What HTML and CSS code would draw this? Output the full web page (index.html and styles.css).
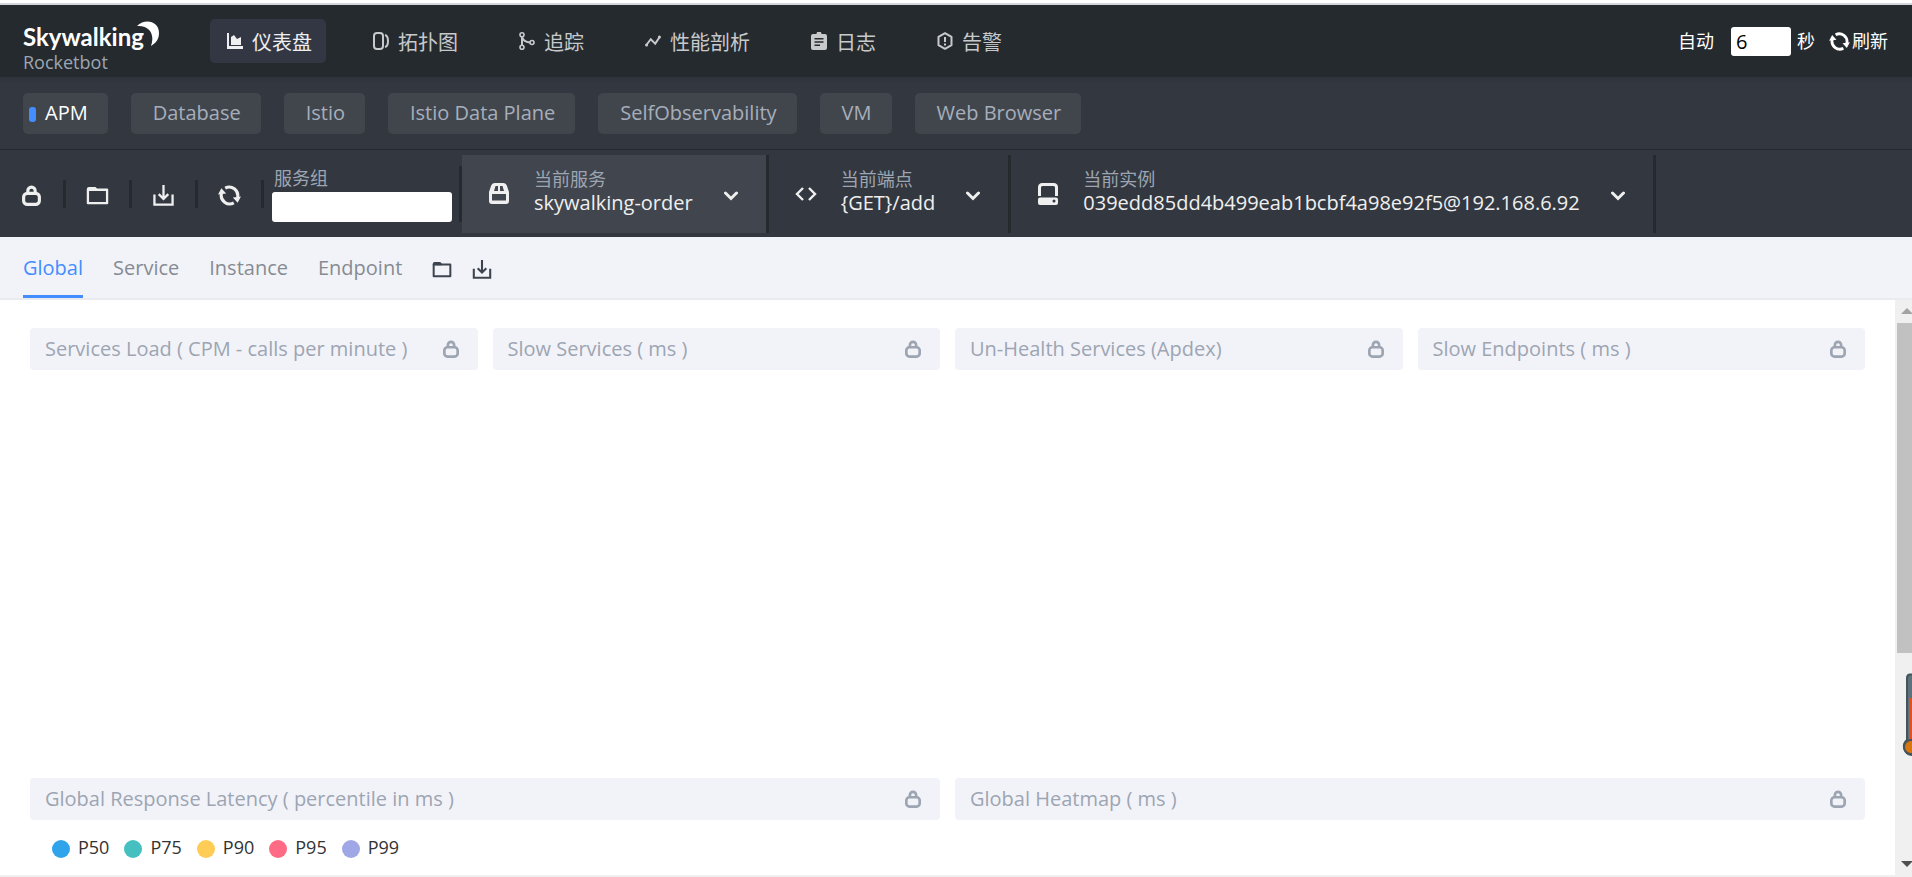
FILE: index.html
```html
<!DOCTYPE html>
<html lang="zh">
<head>
    <meta charset="UTF-8">
    <meta name="viewport" content="width=device-width, initial-scale=1.0">
    <title>SkyWalking Rocketbot</title>
    <link rel="stylesheet" href="styles.css">
</head>
<body>
    <!-- Shared icons -->
    <svg class="sprite">
        <symbol id="lock" viewBox="0 0 18 20">
            <rect x="1.5" y="8" width="15" height="10.5" rx="3.5" fill="none" stroke="currentColor" stroke-width="3"/>
            <path d="M5.5 8V5.5a3.5 3.5 0 0 1 7 0V8" fill="none" stroke="currentColor" stroke-width="3"/>
        </symbol>
        <symbol id="folder" viewBox="0 0 24 20">
            <path d="M2 18V4h20v14z" fill="none" stroke="currentColor" stroke-width="2.400" stroke-linejoin="round"/>
            <path d="M1 3q0-2 2-2h7l2 2.500V5H1z" fill="currentColor"/>
        </symbol>
        <symbol id="download" viewBox="0 0 22 22">
            <path d="M1.500 10v10.500h19V10M11 0v14M6 9.500l5 5 5-5" fill="none" stroke="currentColor" stroke-width="2.400"/>
        </symbol>
        <symbol id="reload" viewBox="0 0 24 22">
            <path d="M7.500 3.200A9 9 0 0 1 20.500 13M16.500 18.800A9 9 0 0 1 3.500 9" fill="none" stroke="currentColor" stroke-width="3.200"/>
            <path d="M15.500 13l8.500-1-3.500 6.500zM8.500 9L0 10l3.500-6.500z" fill="currentColor"/>
        </symbol>
        <symbol id="chevron" viewBox="0 0 14 10">
            <path d="M1.500 2L7 7.500 12.500 2" fill="none" stroke="currentColor" stroke-width="3" stroke-linecap="round"/>
        </symbol>
    </svg>

    <header class="header">
        <div class="logo">
            <span class="logo-name">Skywalking</span>
            <svg class="logo-moon" viewBox="0 0 22 25"><path d="M0 5C8-3 22 0 22 12c0 6-3 10-8 13C18 14 13 4 0 5z" fill="#fff"/></svg>
            <span class="logo-sub">Rocketbot</span>
        </div>
        <nav class="nav">
            <a class="nav-item active" href="#">
                <svg viewBox="0 0 16 16"><path d="M0 0h2v13h14v3H0z" fill="currentColor"/><path d="M4 12V4l3-2 3 4 4-2v8z" fill="currentColor"/></svg>仪表盘
            </a>
            <a class="nav-item" href="#">
                <svg viewBox="0 0 16 18"><rect x="1" y="1" width="9" height="16" rx="3" fill="none" stroke="currentColor" stroke-width="2"/><path d="M12 3c4 1 4 11 0 12" fill="none" stroke="currentColor" stroke-width="2"/></svg>拓扑图
            </a>
            <a class="nav-item" href="#">
                <svg viewBox="0 0 16 18"><g fill="none" stroke="currentColor" stroke-width="1.600"><circle cx="3" cy="2.800" r="2"/><circle cx="3" cy="15.200" r="2"/><circle cx="13" cy="10.500" r="2"/><path d="M3 5v8M3 5c1 4 4 5 8 5.500" stroke-width="2"/></g></svg>追踪
            </a>
            <a class="nav-item" href="#">
                <svg viewBox="0 0 18 14"><path d="M1.500 11.500L6.500 5l5 5L16.500 2.500" fill="none" stroke="currentColor" stroke-width="2.200"/><circle cx="1.800" cy="11.500" r="1.700" fill="currentColor"/><circle cx="16.200" cy="2.500" r="1.700" fill="currentColor"/></svg>性能剖析
            </a>
            <a class="nav-item" href="#">
                <svg viewBox="0 0 16 18"><path fill-rule="evenodd" d="M2 2h3.500a2.500 2.500 0 0 1 5 0H14a2 2 0 0 1 2 2v12a2 2 0 0 1-2 2H2a2 2 0 0 1-2-2V4a2 2 0 0 1 2-2zM3.500 6v1.500h9V6zm0 3.200v1.500h9V9.200zm0 3.300V14H9v-1.500z" fill="currentColor"/></svg>日志
            </a>
            <a class="nav-item" href="#">
                <svg viewBox="0 0 16 18"><path d="M8 1.200l6.500 3.600v8.400L8 16.800l-6.500-3.600V4.800z" fill="none" stroke="currentColor" stroke-width="2" stroke-linejoin="round"/><path d="M8 5v5M8 11.500v2" stroke="currentColor" stroke-width="2"/></svg>告警
            </a>
        </nav>
        <div class="auto">
            <label for="seconds">自动</label>
            <input type="text" id="seconds" value="6">
            <span class="unit">秒</span>
            <button class="refresh"><svg><use href="#reload"/></svg>刷新</button>
        </div>
    </header>

    <nav class="groups">
        <a class="group active" href="#">APM</a>
        <a class="group" href="#">Database</a>
        <a class="group" href="#">Istio</a>
        <a class="group" href="#">Istio Data Plane</a>
        <a class="group" href="#">SelfObservability</a>
        <a class="group" href="#">VM</a>
        <a class="group" href="#">Web Browser</a>
    </nav>

    <div class="toolbar">
        <button class="tool" aria-label="lock"><svg class="icon-lock"><use href="#lock"/></svg></button>
        <button class="tool" aria-label="import"><svg><use href="#folder"/></svg></button>
        <button class="tool" aria-label="export"><svg><use href="#download"/></svg></button>
        <button class="tool" aria-label="reload"><svg><use href="#reload"/></svg></button>
        <div class="service-group">
            <label for="group">服务组</label>
            <input type="text" id="group">
        </div>
        <button class="selector active">
            <svg class="selector-icon" viewBox="0 0 22 24"><path fill-rule="evenodd" d="M7 1h8q3 0 4 3l2 6v9q0 3-3 3H4q-3 0-3-3v-9l2-6q1-3 4-3zM7.500 4L6 9h4V4zM12 4v5h4l-1.500-5zM4 12v6.500h14V12z" fill="currentColor"/></svg>
            <span class="selector-text"><span class="selector-label">当前服务</span><span>skywalking-order</span></span>
            <svg class="chevron"><use href="#chevron"/></svg>
        </button>
        <button class="selector">
            <svg class="selector-icon" viewBox="0 0 22 24"><path d="M8 6l-6 6 6 6M14 6l6 6-6 6" fill="none" stroke="currentColor" stroke-width="2.400"/></svg>
            <span class="selector-text"><span class="selector-label">当前端点</span><span>{GET}/add</span></span>
            <svg class="chevron"><use href="#chevron"/></svg>
        </button>
        <button class="selector">
            <svg class="selector-icon" viewBox="0 0 22 24"><path d="M2.500 14V5.500q0-3 3-3h11q3 0 3 3V14" fill="none" stroke="currentColor" stroke-width="3"/><path fill-rule="evenodd" d="M3 15.500h16q2 0 2 2V21q0 2-2 2H3q-2 0-2-2v-3.500q0-2 2-2zM17 17.500a1.500 1.500 0 1 0 0 3 1.500 1.500 0 0 0 0-3z" fill="currentColor"/></svg>
            <span class="selector-text"><span class="selector-label">当前实例</span><span>039edd85dd4b499eab1bcbf4a98e92f5@192.168.6.92</span></span>
            <svg class="chevron"><use href="#chevron"/></svg>
        </button>
    </div>

    <nav class="tabs">
        <a class="tab active" href="#">Global</a>
        <a class="tab" href="#">Service</a>
        <a class="tab" href="#">Instance</a>
        <a class="tab" href="#">Endpoint</a>
        <button class="tab-tool" aria-label="import"><svg><use href="#folder"/></svg></button>
        <button class="tab-tool" aria-label="export"><svg><use href="#download"/></svg></button>
    </nav>

    <div class="content">
        <main class="board">
            <section class="card">
                <h2>Services Load ( CPM - calls per minute )<svg><use href="#lock"/></svg></h2>
            </section>
            <section class="card">
                <h2>Slow Services ( ms )<svg><use href="#lock"/></svg></h2>
            </section>
            <section class="card">
                <h2>Un-Health Services (Apdex)<svg><use href="#lock"/></svg></h2>
            </section>
            <section class="card">
                <h2>Slow Endpoints ( ms )<svg><use href="#lock"/></svg></h2>
            </section>
            <section class="card wide">
                <h2>Global Response Latency ( percentile in ms )<svg><use href="#lock"/></svg></h2>
                <ul class="legend">
                    <li class="p50">P50</li>
                    <li class="p75">P75</li>
                    <li class="p90">P90</li>
                    <li class="p95">P95</li>
                    <li class="p99">P99</li>
                </ul>
            </section>
            <section class="card wide">
                <h2>Global Heatmap ( ms )<svg><use href="#lock"/></svg></h2>
            </section>
        </main>
        <div class="scrollbar">
            <svg class="arrow" viewBox="0 0 12 6"><path d="M0 6l6-6 6 6z" fill="#a3a3a3"/></svg>
            <div class="thumb"></div>
            <svg class="arrow down" viewBox="0 0 12 6"><path d="M0 0h12L6 6z" fill="#505050"/></svg>
        </div>
        <svg class="thermometer" viewBox="0 0 10 84">
            <path d="M12 1.500H8Q5 1.500 5 5v62a8.500 8.500 0 0 0 5 15h2z" fill="#5d717a" stroke="#45545b" stroke-width="2"/>
            <path d="M7 25h5v45H7z" fill="#e2501d"/>
            <circle cx="9" cy="74" r="7" fill="#d9750f" stroke="#45545b" stroke-width="2"/>
        </svg>
    </div>
</body>
</html>
```
FILE: styles.css
```css
* {
    box-sizing: border-box;
}
body {
    margin: 0;
    height: 100vh;
    display: flex;
    flex-direction: column;
    overflow: hidden;
    border-top: 3px solid #fff;
    border-bottom: 2px solid #f0f0f0;
    background: #fff;
    color: #efefef;
    font-family: "Open Sans", "Noto Sans CJK SC", sans-serif;
    font-size: 20px;
    line-height: 24px;
}
a {
    color: inherit;
    text-decoration: none;
}
button {
    background: none;
    border: none;
    padding: 0;
    color: inherit;
    font: inherit;
    cursor: pointer;
}
input {
    border: none;
    border-radius: 3px;
    background: #fff;
    color: #000;
    font: inherit;
}
svg {
    display: block;
    flex: none;
}
.sprite {
    display: none;
}

/* Header */
.header {
    display: flex;
    align-items: center;
    flex: none;
    height: 74px;
    padding: 0 24px 0 23px;
    border-top: 2px solid #d5d5dc;
    background: #252a2f;
}
.logo {
    position: relative;
    width: 187px;
    padding-top: 14px;
}
.logo-name,
.logo-sub {
    display: block;
}
.logo-name {
    color: #fff;
    font-family: "Lato", sans-serif;
    font-size: 24px;
    font-weight: bold;
    line-height: 28px;
}
.logo-sub {
    color: #9da5b2;
    font-size: 18px;
    line-height: 22px;
}
.logo-moon {
    position: absolute;
    top: 12px;
    left: 114px;
    width: 22px;
    height: 25px;
}
.nav {
    display: flex;
    gap: 30px;
}
.nav-item {
    display: flex;
    align-items: center;
    gap: 9px;
    height: 44px;
    padding: 3px 14px 0 17px;
    border-radius: 5px;
    color: #c8c9cb;
}
.nav-item svg {
    width: 16px;
    height: 18px;
    margin-bottom: 3px;
}
.nav-item.active {
    background: #333743;
    color: #efefef;
}
.auto {
    display: flex;
    align-items: center;
    margin-left: auto;
    color: #fff;
    font-size: 18px;
}
.auto input {
    width: 60px;
    height: 29px;
    margin: 0 6px 0 17px;
    padding: 0 5px;
    font-size: 20px;
}
.refresh {
    display: flex;
    align-items: center;
    margin-left: 14px;
}
.refresh svg {
    width: 21px;
    height: 19px;
    margin-right: 2px;
}

/* Dashboard groups */
.groups {
    display: flex;
    align-items: center;
    gap: 23px;
    flex: none;
    height: 73px;
    padding: 0 23px;
    border-bottom: 1px solid #252a2f;
    background: linear-gradient(#2e333b, #333840 6px);
    color: #a7aebb;
}
.group {
    position: relative;
    padding: 8px 20px 9px 22px;
    border-radius: 5px;
    background: #41464d;
}
.group.active {
    color: #fff;
}
.group.active::before {
    content: "";
    position: absolute;
    top: 14px;
    left: 6px;
    width: 7px;
    height: 15px;
    border-radius: 3px;
    background: #448dfe;
}

/* Toolbar */
.toolbar {
    display: flex;
    align-items: center;
    flex: none;
    height: 87px;
    background: #333840;
}
.tool {
    display: flex;
    align-items: center;
    justify-content: center;
    width: 66px;
    height: 28px;
    border-right: 3px solid #252a2f;
}
.tool svg {
    width: 23px;
    height: 21px;
    margin-top: 3px;
}
.tool .icon-lock {
    width: 19px;
}
.service-group {
    display: flex;
    flex-direction: column;
    gap: 2px;
    padding: 0 7px 0 8px;
    border-right: 3px solid #252a2f;
}
.service-group label,
.selector-label {
    color: #9da5b2;
    font-size: 18px;
}
.service-group label {
    padding-left: 2px;
}
.service-group input {
    width: 180px;
    height: 30px;
}
.selector {
    display: flex;
    align-items: center;
    height: 78px;
    padding: 0 28px 0 26px;
    border-right: 3px solid #252a2f;
    text-align: left;
}
.selector.active {
    background: #41454d;
}
.selector-icon {
    width: 22px;
    height: 24px;
}
.selector-text {
    display: flex;
    flex-direction: column;
    margin: 0 31px 0 24px;
    padding-bottom: 5px;
}
.chevron {
    width: 14px;
    height: 10px;
    margin-top: 4px;
}

/* Tabs */
.tabs {
    display: flex;
    align-items: center;
    gap: 30px;
    flex: none;
    height: 63px;
    padding: 0 23px;
    border-bottom: 2px solid #eaebee;
    background: #f2f3f9;
    color: #868b92;
}
.tab {
    height: 100%;
    padding-top: 19px;
    border-bottom: 3px solid transparent;
}
.tab.active {
    border-color: #448dfe;
    color: #448dfe;
}
.tab-tool {
    margin: 4px -10px 0 0;
    color: #3d444f;
}
.tab-tool svg {
    width: 20px;
    height: 19px;
}

/* Board */
.content {
    position: relative;
    display: flex;
    flex: 1;
    min-height: 0;
}
.board {
    display: grid;
    grid-template-columns: repeat(4, 1fr);
    grid-auto-rows: 435px;
    gap: 15px;
    flex: 1;
    padding: 28px 30px;
    overflow: hidden;
}
.wide {
    grid-column: span 2;
}
.card h2 {
    display: flex;
    align-items: center;
    justify-content: space-between;
    height: 42px;
    margin: 0;
    padding: 0 19px 0 15px;
    border-radius: 4px;
    background: #f2f3f9;
    color: #9da5b2;
    font-size: 20px;
    font-weight: normal;
    white-space: nowrap;
}
.card svg {
    width: 16px;
    height: 18px;
}
.legend {
    display: flex;
    gap: 15px;
    margin: 0;
    padding: 15px 22px;
    list-style: none;
    color: #333;
    font-size: 18px;
}
.legend li {
    display: flex;
    gap: 8px;
}
.legend li::before {
    content: "";
    width: 18px;
    height: 18px;
    margin-top: 5px;
    border-radius: 50%;
}
.p50::before { background: #30a4eb; }
.p75::before { background: #45bfc0; }
.p90::before { background: #ffcc55; }
.p95::before { background: #ff6a84; }
.p99::before { background: #a0a7e6; }

/* Scrollbar */
.scrollbar {
    display: flex;
    flex-direction: column;
    width: 17px;
    padding: 8px 0 8px 2px;
    background: #f0f0f0;
    overflow: hidden;
}
.thumb {
    flex: none;
    height: 59%;
    margin-top: 9px;
    background: #c1c1c1;
}
.arrow {
    width: 12px;
    height: 6px;
    margin-left: 4px;
}
.arrow.down {
    margin-top: auto;
}
.thermometer {
    position: absolute;
    top: 373px;
    right: 0;
    width: 10px;
    height: 84px;
}
```
